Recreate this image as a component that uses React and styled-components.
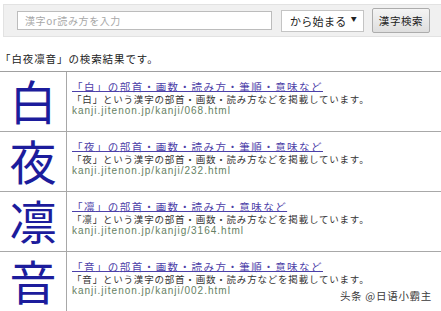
import React from 'react';
import styled, { createGlobalStyle } from 'styled-components';

const GlobalStyle = createGlobalStyle`
    html, body {
        margin: 0;
        padding: 0;
        background: #fff;
        overflow: hidden;
    }
    body {
        font-family: "Noto Sans CJK JP", "Noto Sans", sans-serif;
        color: #333;
    }
`;

const Page = styled.div`
    position: relative;
    width: 441px;
    height: 311px;
    overflow: hidden;
    padding-top: 4px;
    box-sizing: border-box;
`;

const SearchBar = styled.form`
    display: flex;
    align-items: center;
    height: 33px;
    margin-left: 3px;
    padding-left: 13px;
    background: #f0f0f0;
    border: 1px solid #e2e2e2;
    border-right: none;
    box-sizing: border-box;
`;

const Input = styled.div`
    width: 255px;
    height: 19px;
    margin-right: 9px;
    padding-left: 7px;
    box-sizing: border-box;
    background: #fff;
    border: 1px solid #bcbcbc;
    color: #a8a8a8;
    font-size: 10px;
    letter-spacing: 0.6px;
    line-height: 17px;
    white-space: nowrap;
`;

const Select = styled.div`
    display: flex;
    align-items: center;
    justify-content: space-between;
    width: 83px;
    height: 22px;
    margin-right: 8px;
    padding: 0 6px 0 8px;
    box-sizing: border-box;
    background: #fff;
    border: 1px solid #c4c4c4;
    font-size: 11px;
    letter-spacing: 0.3px;
    white-space: nowrap;
    color: #222;
    span {
        font-size: 6px;
        margin-bottom: 5px;
    }
`;

const Button = styled.div`
    width: 58px;
    height: 25px;
    box-sizing: border-box;
    border: 1px solid #acacac;
    border-radius: 2px;
    background: linear-gradient(#f4f4f4, #dedede);
    font-size: 10.5px;
    letter-spacing: 0.6px;
    line-height: 23px;
    text-align: center;
    white-space: nowrap;
    color: #222;
`;

const ResultHead = styled.p`
    margin: 15px 0 0;
    font-size: 10.5px;
    letter-spacing: 0.9px;
    line-height: 13px;
    color: #222;
    height: 19px;
`;

const Table = styled.div`
    border-top: 1px solid #a0a0a0;
`;

const Row = styled.div`
    display: flex;
    height: 60px;
    border-bottom: 1px solid #a8a8a8;
    box-sizing: border-box;
`;

const KanjiCell = styled.div`
    width: 67px;
    flex-shrink: 0;
    border-right: 1px solid #a8a8a8;
    display: flex;
    align-items: center;
    justify-content: center;
    padding-bottom: 5px;
    box-sizing: border-box;
    font-size: 47px;
    line-height: 1;
    color: #1c1c9c;
`;

const InfoCell = styled.div`
    display: flex;
    flex-direction: column;
    padding: 9px 0 0 5px;
    white-space: nowrap;
`;

const Link = styled.a`
    font-size: 10.5px;
    letter-spacing: 1.45px;
    line-height: 12px;
    color: #4c40a8;
    text-decoration: underline;
    text-decoration-thickness: 1px;
    text-underline-offset: 0px;
`;

const Desc = styled.span`
    margin-top: 1px;
    font-size: 9.5px;
    letter-spacing: 0.8px;
    line-height: 10px;
    color: #333;
`;

const Url = styled.span`
    margin-top: 1px;
    font-family: "Liberation Sans", Arial, sans-serif;
    font-size: 10px;
    letter-spacing: 1px;
    line-height: 11px;
    color: #667f63;
`;

const Watermark = styled.div`
    position: absolute;
    right: 9px;
    bottom: 8px;
    font-family: "Noto Sans CJK SC", sans-serif;
    font-size: 10.5px;
    letter-spacing: 0.7px;
    color: #3a3a3a;
`;

const results = [
    { kanji: '白', menu: '部首・画数・読み方・筆順・意味など', url: 'kanji.jitenon.jp/kanji/068.html' },
    { kanji: '夜', menu: '部首・画数・読み方・筆順・意味など', url: 'kanji.jitenon.jp/kanji/232.html' },
    { kanji: '凛', menu: '部首・画数・読み方・意味など', url: 'kanji.jitenon.jp/kanjig/3164.html' },
    { kanji: '音', menu: '部首・画数・読み方・筆順・意味など', url: 'kanji.jitenon.jp/kanji/002.html' },
];

export default function App() {
    return (
        <Page>
            <GlobalStyle />
            <SearchBar>
                <Input>漢字or読み方を入力</Input>
                <Select>から始まる<span>▼</span></Select>
                <Button>漢字検索</Button>
            </SearchBar>
            <ResultHead>「白夜凛音」の検索結果です。</ResultHead>
            <Table>
                {results.map((r) => (
                    <Row key={r.kanji}>
                        <KanjiCell>{r.kanji}</KanjiCell>
                        <InfoCell>
                            <Link href="#">「{r.kanji}」の{r.menu}</Link>
                            <Desc>「{r.kanji}」という漢字の部首・画数・読み方などを掲載しています。</Desc>
                            <Url>{r.url}</Url>
                        </InfoCell>
                    </Row>
                ))}
            </Table>
            <Watermark>头条 @日语小霸主</Watermark>
        </Page>
    );
}
